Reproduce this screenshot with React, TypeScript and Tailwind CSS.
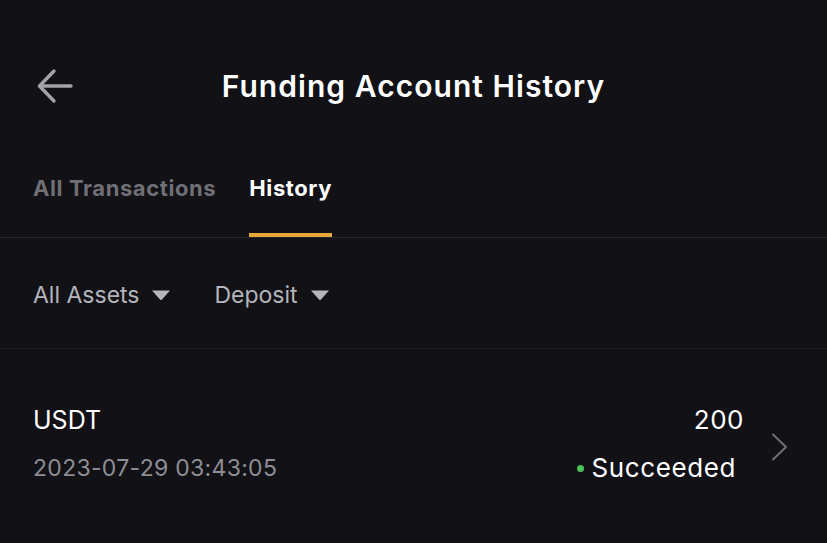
function Caret() {
  return (
    <svg width="20" height="12" viewBox="0 0 20 12" className="ml-3">
      <path d="M1 1.5 H19 L11 10.5 Q10 11.5 9 10.5 Z" fill="#b5b5bb" />
    </svg>
  );
}

export default function App() {
  return (
    <div
      className="w-[827px] h-[543px] bg-[#111116] text-white overflow-hidden"
      style={{ fontFamily: "Inter, 'Noto Sans', sans-serif" }}
    >
      {/* header */}
      <div className="relative mt-[62px] h-[48px] flex items-center justify-center">
        <svg
          width="38"
          height="36"
          viewBox="0 0 38 36"
          className="absolute left-[36px] top-[6px]"
          fill="none"
          stroke="#a3a3a8"
          strokeWidth="3.4"
          strokeLinecap="round"
          strokeLinejoin="round"
        >
          <path d="M4 18 H35" />
          <path d="M18 3 L3.5 18 L18 33" />
        </svg>
        <div className="text-[30px] font-semibold tracking-[1.05px]">
          Funding Account History
        </div>
      </div>

      {/* tabs */}
      <div className="mt-[63px] flex gap-[33px] px-[33px] border-b border-[#26262c]">
        <div className="text-[22px] leading-[30px] font-bold tracking-[0.6px] text-[#6f6f75] pb-[34px]">
          All Transactions
        </div>
        <div className="text-[22px] leading-[30px] font-bold tracking-[0.6px] text-white pb-[30px] border-b-4 border-[#e8a73a]">
          History
        </div>
      </div>

      {/* filters */}
      <div className="flex items-center px-[33px] pt-[42px] pb-[38px] border-b border-[#1f1f25] text-[23px] leading-[30px] text-[#b5b5bb]">
        <div className="flex items-center">
          All Assets
          <Caret />
        </div>
        <div className="flex items-center ml-[43px]">
          Deposit
          <Caret />
        </div>
      </div>

      {/* record */}
      <div className="flex items-center pl-[33px] pr-[39px] pt-[56px]">
        <div className="flex-1 flex flex-col gap-[18px]">
          <div className="text-[25px] leading-[30px]">USDT</div>
          <div className="text-[23px] leading-[30px] tracking-[0.3px] text-[#8e8e94]">
            2023-07-29 03:43:05
          </div>
        </div>
        <div className="flex flex-col items-end gap-[18px]">
          <div className="text-[26px] leading-[30px] tracking-[0.5px]">200</div>
          <div className="flex items-center text-[26px] leading-[30px] tracking-[0.6px] pr-[8px]">
            <span className="w-[7px] h-[7px] rounded-full bg-[#4cc35a] mr-[8px]" />
            Succeeded
          </div>
        </div>
        <svg
          width="17"
          height="28"
          viewBox="0 0 17 28"
          className="ml-[27px] mt-[6px]"
          fill="none"
          stroke="#6e6e73"
          strokeWidth="2"
          strokeLinecap="round"
          strokeLinejoin="round"
        >
          <path d="M2 1.5 L15 14 L2 26.5" />
        </svg>
      </div>
    </div>
  );
}
